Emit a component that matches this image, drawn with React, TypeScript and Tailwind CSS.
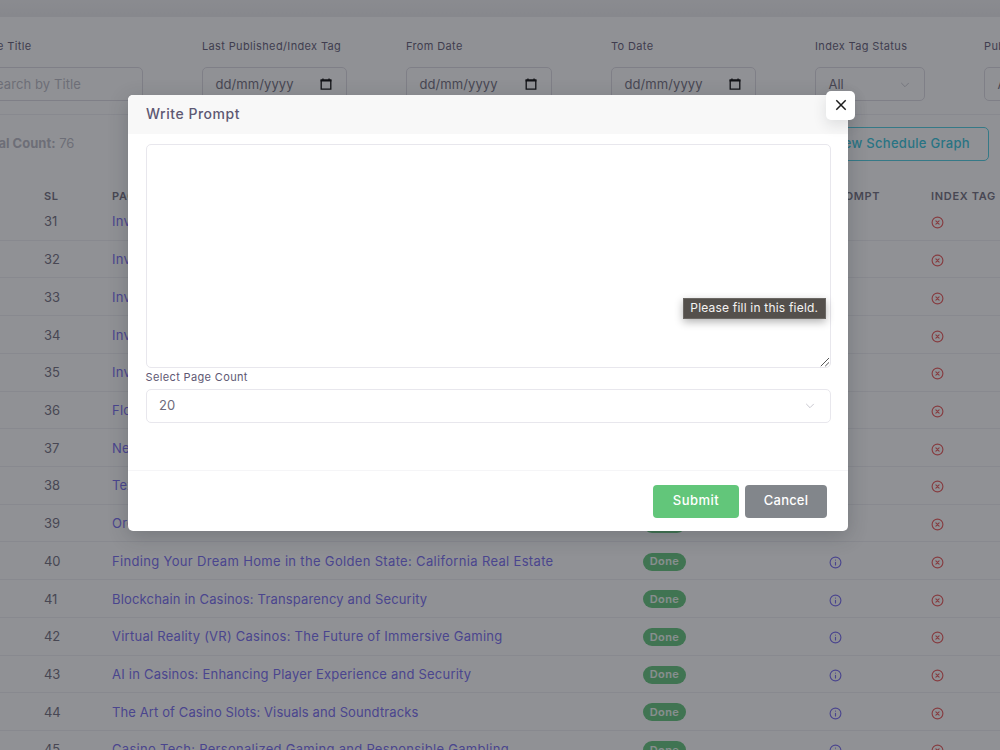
import { useState } from "react";
import type { ReactNode } from "react";

type Topic = {
  sl: number;
  title: string;
  tracking?: string;
};

const TOPICS: Topic[] = [
  { sl: 31, title: "Investing in Real Estate" },
  { sl: 32, title: "Investing in Rental Property" },
  { sl: 33, title: "Investing in Vacation Homes" },
  { sl: 34, title: "Investing in Commercial Property" },
  { sl: 35, title: "Investing in New Developments" },
  { sl: 36, title: "Florida Real Estate" },
  { sl: 37, title: "New York Real Estate" },
  { sl: 38, title: "Texas Real Estate" },
  { sl: 39, title: "Oregon Real Estate" },
  {
    sl: 40,
    title: "Finding Your Dream Home in the Golden State: California Real Estate",
    tracking: "tracking-[0.33px]",
  },
  {
    sl: 41,
    title: "Blockchain in Casinos: Transparency and Security",
    tracking: "tracking-[0.17px]",
  },
  {
    sl: 42,
    title: "Virtual Reality (VR) Casinos: The Future of Immersive Gaming",
    tracking: "tracking-[0.245px]",
  },
  { sl: 43, title: "AI in Casinos: Enhancing Player Experience and Security" },
  {
    sl: 44,
    title: "The Art of Casino Slots: Visuals and Soundtracks",
    tracking: "tracking-[0.115px]",
  },
  {
    sl: 45,
    title: "Casino Tech: Personalized Gaming and Responsible Gambling",
    tracking: "tracking-[0.29px]",
  },
];

export default function App() {
  const [isPromptOpen, setIsPromptOpen] = useState(true);

  return (
    <main className="relative h-[750px] w-[1000px] overflow-hidden bg-white font-['Inter','Liberation_Sans',sans-serif] text-[#6e6b7b]">
      <div className="h-[17px] bg-linear-to-b from-[#f3f3f4] to-[#ececee]" />
      <Filters />
      <Toolbar />
      <TopicTable />
      {isPromptOpen ? (
        <PromptModal onClose={() => setIsPromptOpen(false)} />
      ) : null}
    </main>
  );
}

function Filters() {
  return (
    <section className="flex h-[98px] border-b border-[#efeef3] pt-[22px] whitespace-nowrap">
      <Field label="Page Title" className="-ml-[24px] w-[167px]">
        <span className="-ml-[2px] tracking-[0.1px] text-[#b9b9c3]">Search by Title</span>
      </Field>
      <Field label="Last Published/Index Tag" className="ml-[59px] w-[145px]">
        <DateValue />
      </Field>
      <Field label="From Date" className="ml-[59px] w-[146px]">
        <DateValue />
      </Field>
      <Field label="To Date" className="ml-[59px] w-[145px]">
        <DateValue />
      </Field>
      <Field label="Index Tag Status" className="ml-[59px] w-[110px]">
        <span>All</span>
        <Chevron />
      </Field>
      <Field label="Publish Status" className="ml-[59px] w-[110px] shrink-0">
        <span>All</span>
        <Chevron />
      </Field>
    </section>
  );
}

function Field({
  label,
  className,
  children,
}: {
  label: string;
  className: string;
  children: ReactNode;
}) {
  return (
    <div className={`shrink-0 ${className}`}>
      <p className="h-[28px] text-[11px] leading-[14px] tracking-[0.36px] text-[#5e5873]">
        {label}
      </p>
      <div className="flex h-[34px] items-center justify-between rounded-[5px] border border-[#dddbe3] px-[12.5px] pt-px text-[13px]">
        {children}
      </div>
    </div>
  );
}

function DateValue() {
  return (
    <>
      <span className="tracking-[0.08px]">dd/mm/yyyy</span>
      <svg width="12" height="12" viewBox="0 0 12 12" className="mr-[2px] mb-px" fill="none">
        <path d="M1.2 2.2h9.6v9H1.2z" stroke="#000" strokeWidth="1.3" />
        <path d="M.6 1.6h10.8v2H.6zM2.3.4h1.3v2H2.3zM8.4.4h1.3v2H8.4z" fill="#000" />
      </svg>
    </>
  );
}

function Chevron() {
  return (
    <svg width="10" height="10" viewBox="0 0 10 10" className="mr-[2px]" fill="none">
      <path
        d="M1.5 3.2 5 6.7l3.5-3.5"
        stroke="#c9c8d0"
        strokeWidth="1"
        strokeLinecap="round"
        strokeLinejoin="round"
      />
    </svg>
  );
}

function Toolbar() {
  return (
    <section className="flex h-[64px] items-start justify-between pt-[12px] pr-[11px] whitespace-nowrap">
      <p className="-ml-[22px] text-[13px] leading-[33px] text-[#b9b9c3]">
        <span className="font-bold">Total Count:</span> 76
      </p>
      <button
        type="button"
        className="h-[34px] w-[178px] rounded-[5px] border border-[#48cfe3] pr-[18px] text-right text-[13px] font-medium tracking-[0.3px] text-[#2fc5dc]"
      >
        View Schedule Graph
      </button>
    </section>
  );
}

function TopicTable() {
  return (
    <section className="whitespace-nowrap">
      <div className="grid h-[24px] grid-cols-[68px_531px_186px_102px_1fr] items-center pl-[44px] pt-[10px] text-[11px] leading-[14px] font-semibold tracking-[0.68px]">
        <span>SL</span>
        <span>PAGE TITLE</span>
        <span>STATUS</span>
        <span>PROMPT</span>
        <span>INDEX TAG</span>
      </div>
      {TOPICS.map((topic) => (
        <div
          key={topic.sl}
          className="grid h-[37.72px] grid-cols-[68px_531px_186px_102px_1fr] items-center border-b border-[#efeef3] pt-[1.5px] pl-[44px] text-[13px]"
        >
          <span className="tracking-[-0.1px]">{topic.sl}</span>
          <span className={`text-[#7367f0] ${topic.tracking ?? "tracking-[0.22px]"}`}>
            {topic.title}
          </span>
          <span className="flex h-[18px] w-[43px] items-center justify-center rounded-full bg-[#5fc578] text-[11px] font-semibold tracking-[0.4px] text-white/90">
            Done
          </span>
          <InfoIcon />
          <CrossIcon />
        </div>
      ))}
    </section>
  );
}

function InfoIcon() {
  return (
    <svg width="13" height="13" viewBox="0 0 13 13" className="mt-[1.5px]" fill="none" stroke="#7367f0" strokeWidth="1.15">
      <circle cx="6.5" cy="6.5" r="5.4" />
      <path d="M6.5 6.2v2.7M6.5 4.1h.01" strokeLinecap="round" />
    </svg>
  );
}

function CrossIcon() {
  return (
    <svg width="13" height="13" viewBox="0 0 13 13" className="mt-[1.5px]" fill="none" stroke="#ea5455" strokeWidth="1.15">
      <circle cx="6.5" cy="6.5" r="5.4" />
      <path d="m4.9 4.9 3.2 3.2M8.1 4.9 4.9 8.1" strokeLinecap="round" />
    </svg>
  );
}

function PromptModal({ onClose }: { onClose: () => void }) {
  const [prompt, setPrompt] = useState("");

  return (
    <div className="absolute inset-0 flex items-start justify-center bg-[#22242b]/50 pt-[94.5px] pr-[24px]">
      <div className="relative h-[436.5px] w-[720px] rounded-[5px] bg-white shadow-[0_5px_20px_rgba(34,41,47,0.24)]">
        <header className="flex h-[39.5px] items-center rounded-t-[5px] bg-[#f8f8f8] px-[18px] pb-px">
          <h2 className="text-[14px] font-medium tracking-[0.52px] text-[#5e5873]">
            Write Prompt
          </h2>
        </header>
        <button
          type="button"
          aria-label="Close"
          onClick={onClose}
          className="absolute -top-[4px] -right-[7px] grid size-[29.5px] place-items-center rounded-[5px] bg-white pl-px shadow-[0_5px_14px_rgba(34,41,47,0.12)]"
        >
          <svg width="12" height="12" viewBox="0 0 12 12" fill="none">
            <path d="m1.3 1.3 9.4 9.4M10.7 1.3l-9.4 9.4" stroke="#1c1c1c" strokeWidth="1.5" />
          </svg>
        </button>

        <div className="h-[336px] px-[17.5px] pt-[10px]">
          <div className="relative h-[223.5px]">
            <textarea
              value={prompt}
              onChange={(event) => setPrompt(event.target.value)}
              className="block h-full w-full resize-none rounded-[5px] border border-[#e8e7ed] px-3 py-2 text-[13px] outline-none"
            />
            <svg
              width="10"
              height="10"
              viewBox="0 0 10 10"
              className="absolute right-[1px] bottom-[1px]"
              stroke="#555"
              strokeWidth="1"
            >
              <path d="M.8 9.2 9 1M5.2 9.2 9 5.4" />
            </svg>
            <div className="absolute right-[5px] bottom-[48.5px] flex h-[21.5px] w-[142.5px] items-center justify-center border border-[#6b6864] bg-[#54504c] text-[12px] tracking-[0.2px] whitespace-nowrap text-[#f4f3f2] shadow-[0_3px_8px_rgba(0,0,0,0.3)]">
              Please fill in this field.
            </div>
          </div>
          <p className="h-[21px] pt-[2px] text-[11px] leading-[14px] tracking-[0.36px] text-[#5e5873]">
            Select Page Count
          </p>
          <div className="flex h-[34px] items-center justify-between rounded-[5px] border border-[#e8e7ed] px-[12.5px] pt-px text-[13px]">
            <span>20</span>
            <Chevron />
          </div>
        </div>

        <footer className="flex h-[61px] items-start justify-end gap-[6px] border-t border-[#f5f5f7] pt-[13.5px] pr-[21px] text-[13px] font-medium text-white">
          <button type="button" className="h-[33px] w-[86px] rounded-[4px] bg-[#62c67a] tracking-[0.5px]">
            Submit
          </button>
          <button
            type="button"
            onClick={onClose}
            className="h-[33px] w-[82px] rounded-[4px] bg-[#82868b] tracking-[0.2px]"
          >
            Cancel
          </button>
        </footer>
      </div>
    </div>
  );
}
